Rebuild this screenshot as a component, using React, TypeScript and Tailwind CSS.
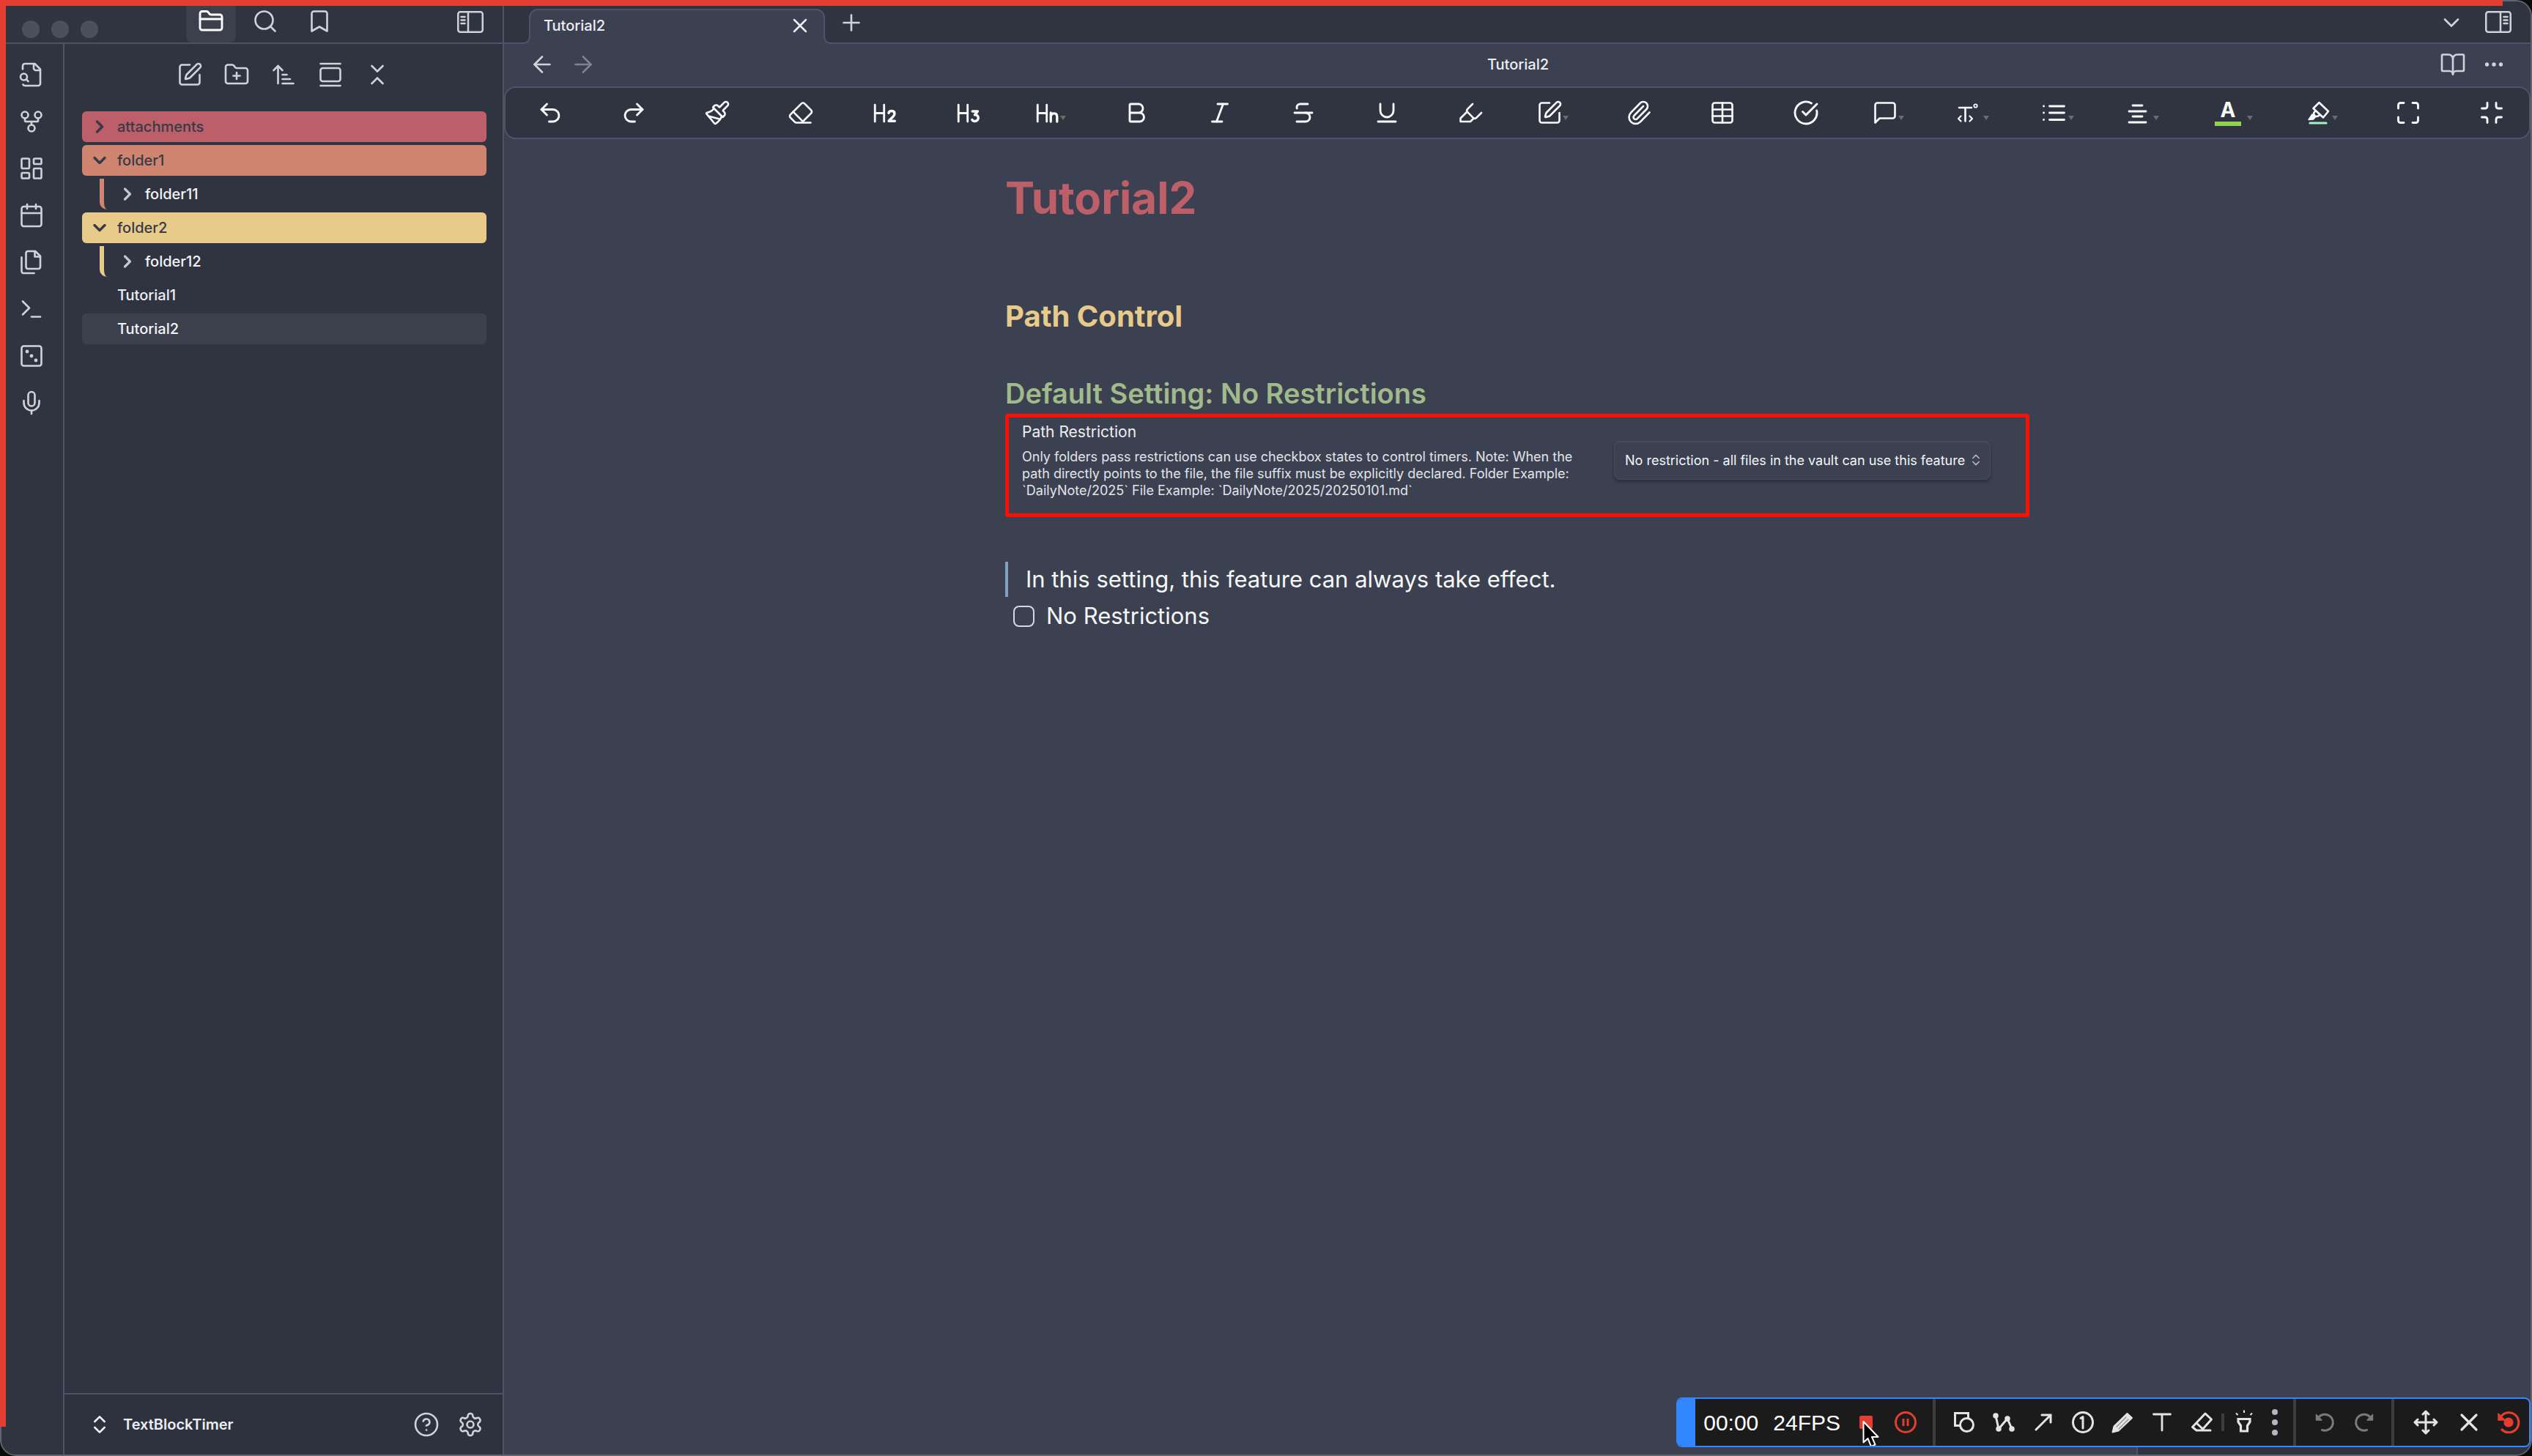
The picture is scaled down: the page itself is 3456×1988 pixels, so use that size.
import React from "react";
import {
  ArrowLeft,
  ArrowRight,
  ArrowUpNarrowWide,
  Bold,
  BookOpen,
  Bookmark,
  Calendar,
  ChevronDown,
  ChevronRight,
  ChevronsDownUp,
  ChevronsUpDown,
  CircleCheckBig,
  CircleHelp,
  Eraser,
  FolderClosed,
  FolderPlus,
  GalleryVertical,
  GitFork,
  Highlighter,
  Italic,
  LayoutDashboard,
  Maximize,
  Mic,
  Minimize,
  Paintbrush,
  Paperclip,
  Plus,
  Redo2,
  Search,
  SquarePen,
  Strikethrough,
  Table,
  Terminal,
  Underline,
  Undo2,
  X,
} from "lucide-react";

type SvgProps = { className?: string; children: React.ReactNode; box?: string; stroke?: number };

function Glyph({ className = "size-9", children, box = "0 0 24 24", stroke = 1.75 }: SvgProps) {
  return (
    <svg
      viewBox={box}
      className={className}
      fill="none"
      stroke="currentColor"
      strokeWidth={stroke}
      strokeLinecap="round"
      strokeLinejoin="round"
      aria-hidden="true"
    >
      {children}
    </svg>
  );
}

function IconButton({ label, className = "", children }: { label: string; className?: string; children: React.ReactNode }) {
  return (
    <button type="button" aria-label={label} className={`flex shrink-0 items-center justify-center ${className}`}>
      {children}
    </button>
  );
}

const FileSearchIcon = () => (
  <Glyph>
    <path d="M14 2v4a2 2 0 0 0 2 2h4" />
    <path d="M4.3 21a2 2 0 0 0 1.7 1H18a2 2 0 0 0 2-2V7l-5-5H6a2 2 0 0 0-2 2v3" />
    <path d="m9 18-1.8-1.8" />
    <circle cx="5" cy="14" r="3" />
  </Glyph>
);

const FilesIcon = () => (
  <Glyph>
    <path d="M15.5 2H8.6c-.4 0-.8.2-1.1.5-.3.3-.5.7-.5 1.1v12.8c0 .4.2.8.5 1.1.3.3.7.5 1.1.5h9.8c.4 0 .8-.2 1.1-.5.3-.3.5-.7.5-1.1V6.5L15.5 2z" />
    <path d="M3 7.6v12.8c0 .4.2.8.5 1.1.3.3.7.5 1.1.5h9.8" />
    <path d="M15 2v5h5" />
  </Glyph>
);

const DiceIcon = () => (
  <Glyph>
    <rect x="3" y="3" width="18" height="18" rx="2" />
    <g fill="currentColor" strokeWidth="0.8">
      <circle cx="8" cy="8" r="1.2" />
      <circle cx="12" cy="12" r="1.2" />
      <circle cx="16" cy="16" r="1.2" />
    </g>
  </Glyph>
);

const GearIcon = () => (
  <Glyph>
    <path d="M12.22 2h-.44a2 2 0 0 0-2 2v.18a2 2 0 0 1-1 1.73l-.43.25a2 2 0 0 1-2 0l-.15-.08a2 2 0 0 0-2.73.73l-.22.38a2 2 0 0 0 .73 2.73l.15.1a2 2 0 0 1 1 1.72v.51a2 2 0 0 1-1 1.74l-.15.09a2 2 0 0 0-.73 2.73l.22.38a2 2 0 0 0 2.73.73l.15-.08a2 2 0 0 1 2 0l.43.25a2 2 0 0 1 1 1.73V20a2 2 0 0 0 2 2h.44a2 2 0 0 0 2-2v-.18a2 2 0 0 1 1-1.73l.43-.25a2 2 0 0 1 2 0l.15.08a2 2 0 0 0 2.73-.73l.22-.39a2 2 0 0 0-.73-2.73l-.15-.08a2 2 0 0 1-1-1.74v-.5a2 2 0 0 1 1-1.74l.15-.09a2 2 0 0 0 .73-2.73l-.22-.38a2 2 0 0 0-2.73-.73l-.15.08a2 2 0 0 1-2 0l-.43-.25a2 2 0 0 1-1-1.73V4a2 2 0 0 0-2-2z" />
    <circle cx="12" cy="12" r="3" />
  </Glyph>
);

function PanelIcon({ right = false }: { right?: boolean }) {
  return (
    <Glyph box="0 0 36 30" className="h-[30px] w-9" stroke={2.5}>
      <rect x="1.25" y="1.25" width="33.5" height="27.5" rx="3" />
      {right ? <path d="M21 1.5v27M25.5 8h5M25.5 12.5h5M25.5 17h5" /> : <path d="M15 1.5v27M5.5 8h5M5.5 12.5h5M5.5 17h5" />}
    </Glyph>
  );
}

const ribbon = [
  { label: "Quick switcher", icon: <FileSearchIcon /> },
  { label: "Graph view", icon: <GitFork className="size-9" strokeWidth={1.75} /> },
  { label: "Canvas", icon: <LayoutDashboard className="size-9" strokeWidth={1.75} /> },
  { label: "Daily note", icon: <Calendar className="size-9" strokeWidth={1.75} /> },
  { label: "Templates", icon: <FilesIcon /> },
  { label: "Command palette", icon: <Terminal className="size-9" strokeWidth={1.75} /> },
  { label: "Random note", icon: <DiceIcon /> },
  { label: "Audio recorder", icon: <Mic className="size-9" strokeWidth={1.75} /> },
];

function FolderRow({ name, open = false, tone }: { name: string; open?: boolean; tone: string }) {
  const Chevron = open ? ChevronDown : ChevronRight;
  return (
    <button type="button" aria-expanded={open} className={`flex h-[42px] items-center rounded-md pl-2.5 text-[#373b46] ${tone}`}>
      <Chevron className="mr-2.5 size-7" strokeWidth={3} />
      {name}
    </button>
  );
}

function NestedRow({ name, tone }: { name: string; tone: string }) {
  return (
    <div className="flex h-[42px] pl-6">
      <span className={`h-[42px] w-2.5 rounded-bl-[10px] border-l-[6px] ${tone}`} />
      <button type="button" aria-expanded={false} className="flex items-center pl-3.5 text-[#f2f4f8]">
        <ChevronRight className="mr-2.5 size-7 text-[#c3c7d0]" strokeWidth={2.75} />
        {name}
      </button>
    </div>
  );
}

function Sidebar() {
  return (
    <aside className="flex w-[686px] shrink-0 flex-col border-r-2 border-[#4a556a] bg-[#2f3440] text-[#d0d2d9]">
      <header className="flex h-[58px] shrink-0 items-start border-b-2 border-[#4a556a] pt-1.5">
        <div className="flex gap-4 pl-7 pt-5">
          <span className="size-6 rounded-full bg-[#4b505c]" />
          <span className="size-6 rounded-full bg-[#4b505c]" />
          <span className="size-6 rounded-full bg-[#4b505c]" />
        </div>
        <nav className="ml-[120px] flex">
          <IconButton label="Files" className="h-[50px] w-[68px] rounded-b-lg bg-[#3b404c] pb-2 text-white">
            <FolderClosed className="size-9" strokeWidth={1.9} />
          </IconButton>
          <IconButton label="Search" className="h-[50px] w-20 pb-2">
            <Search className="size-9" strokeWidth={1.75} />
          </IconButton>
          <IconButton label="Bookmarks" className="h-[50px] w-[68px] pb-2">
            <Bookmark className="size-9" strokeWidth={1.75} />
          </IconButton>
        </nav>
        <IconButton label="Collapse sidebar" className="ml-auto mr-[26px] h-11">
          <PanelIcon />
        </IconButton>
      </header>
      <div className="flex min-h-0 grow">
        <nav aria-label="Ribbon" className="flex w-[86px] shrink-0 flex-col items-center border-r-2 border-[#4a556a] pr-0.5 pt-2.5">
          {ribbon.map((item) => (
            <IconButton key={item.label} label={item.label} className="size-16">
              {item.icon}
            </IconButton>
          ))}
        </nav>
        <div className="flex min-w-0 grow flex-col">
          <div className="flex justify-center pt-2.5">
            <IconButton label="New note" className="size-16">
              <SquarePen className="size-9" strokeWidth={1.75} />
            </IconButton>
            <IconButton label="New folder" className="size-16">
              <FolderPlus className="size-9" strokeWidth={1.75} />
            </IconButton>
            <IconButton label="Sort order" className="size-16">
              <ArrowUpNarrowWide className="size-9" strokeWidth={1.75} />
            </IconButton>
            <IconButton label="Reveal current file" className="size-16">
              <GalleryVertical className="size-9" strokeWidth={1.75} />
            </IconButton>
            <IconButton label="Collapse all" className="size-16">
              <ChevronsDownUp className="size-9" strokeWidth={1.75} />
            </IconButton>
          </div>
          <div className="flex grow flex-col gap-1 pl-6 pr-[22px] pt-[18px] text-xl font-medium">
            <FolderRow name="attachments" tone="bg-[#bc5f69]" />
            <FolderRow name="folder1" open tone="bg-[#cf8570]" />
            <NestedRow name="folder11" tone="border-[#cf8570]" />
            <FolderRow name="folder2" open tone="bg-[#e8ca8a]" />
            <NestedRow name="folder12" tone="border-[#e8ca8a]" />
            <button type="button" className="flex h-[42px] items-center rounded-md pl-12 text-[#eceef2]">
              Tutorial1
            </button>
            <button type="button" className="flex h-[42px] items-center rounded-md bg-[#3b404c] pl-12 text-[#f2f4f8]">
              Tutorial2
            </button>
          </div>
          <footer className="flex h-[84px] shrink-0 items-center border-t-2 border-[#4a556a] bg-[#2e323e] pl-8 pr-[26px]">
            <button type="button" className="flex items-center gap-4 text-xl font-semibold text-[#eceef3]">
              <ChevronsUpDown className="size-8" strokeWidth={2} />
              TextBlockTimer
            </button>
            <IconButton label="Help" className="ml-auto h-12 w-[84px]">
              <CircleHelp className="size-9" strokeWidth={1.75} />
            </IconButton>
            <IconButton label="Settings" className="h-12 w-9">
              <GearIcon />
            </IconButton>
          </footer>
        </div>
      </div>
    </aside>
  );
}

function TabBar() {
  return (
    <header className="flex h-[58px] shrink-0 items-end border-b-2 border-[#4a556a] bg-[#2f3440] pl-[34px] pr-[26px] text-[#d0d2d9]">
      <div className="relative -mb-0.5 flex h-12 w-[404px] items-center rounded-t-xl border-x-2 border-t-2 border-[#4a556a] bg-[#3b4150] pb-1 pl-[18px] pr-4">
        <span className="absolute -left-3 bottom-0 size-3 bg-[#3b4150]">
          <span className="block size-3 rounded-br-[10px] border-b-2 border-r-2 border-[#4a556a] bg-[#2f3440]" />
        </span>
        <span className="absolute -right-3 bottom-0 size-3 bg-[#3b4150]">
          <span className="block size-3 rounded-bl-[10px] border-b-2 border-l-2 border-[#4a556a] bg-[#2f3440]" />
        </span>
        <span className="grow text-xl font-medium text-[#eceef2]">Tutorial2</span>
        <IconButton label="Close tab" className="text-[#eceef2]">
          <X className="size-8" strokeWidth={1.9} />
        </IconButton>
      </div>
      <IconButton label="New tab" className="ml-[18px] h-[54px]">
        <Plus className="size-9" strokeWidth={1.75} />
      </IconButton>
      <IconButton label="Tab list" className="ml-auto h-[54px]">
        <ChevronDown className="size-9" strokeWidth={1.75} />
      </IconButton>
      <IconButton label="Expand sidebar" className="ml-7 h-14">
        <PanelIcon right />
      </IconButton>
    </header>
  );
}

function ViewHeader() {
  return (
    <div className="flex h-[58px] shrink-0 items-center pb-0.5 pl-[34px] pr-8 text-[#d0d2d9]">
      <div className="flex flex-1 gap-5">
        <IconButton label="Back" className="size-9">
          <ArrowLeft className="size-9" strokeWidth={1.75} />
        </IconButton>
        <IconButton label="Forward" className="size-9 text-[#80848f]">
          <ArrowRight className="size-9" strokeWidth={1.75} />
        </IconButton>
      </div>
      <span className="text-xl font-medium text-[#eceef2]">Tutorial2</span>
      <div className="flex flex-1 justify-end gap-5">
        <IconButton label="Reading view" className="size-9">
          <BookOpen className="size-9" strokeWidth={1.75} />
        </IconButton>
        <IconButton label="More options" className="size-9">
          <svg viewBox="0 0 36 36" className="size-9" fill="currentColor" aria-hidden="true">
            <circle cx="8.5" cy="18" r="2.7" />
            <circle cx="18" cy="18" r="2.7" />
            <circle cx="27.5" cy="18" r="2.7" />
          </svg>
        </IconButton>
      </div>
    </div>
  );
}

const H = <path d="M3.5 4.7v15.3M11.8 4.7v15.3M3.5 12.3h8.3" />;

const tools: { label: string; icon: React.ReactNode; menu?: boolean; wide?: boolean }[] = [
  { label: "Undo", icon: <Undo2 className="size-9" strokeWidth={1.9} /> },
  { label: "Redo", icon: <Redo2 className="size-9" strokeWidth={1.9} /> },
  { label: "Format brush", icon: <Paintbrush className="size-9" strokeWidth={1.75} /> },
  { label: "Clear formatting", icon: <Eraser className="size-9" strokeWidth={1.75} /> },
  {
    label: "Heading 2",
    icon: (
      <Glyph stroke={1.9}>
        {H}
        <path strokeWidth="2.3" d="M16 12.2c.6-2.6 5.4-2.5 5.3.6 0 2.5-3.4 4.2-5.2 6.7h5.5" />
      </Glyph>
    ),
  },
  {
    label: "Heading 3",
    icon: (
      <Glyph stroke={1.9}>
        {H}
        <path strokeWidth="2.3" d="M16.2 10.6h4.8l-2.7 3.3c4.3-.3 4.3 5.7 0 5.7-1.3 0-2-.5-2.4-1.3" />
      </Glyph>
    ),
  },
  {
    label: "Heading level",
    menu: true,
    icon: (
      <Glyph stroke={1.9}>
        {H}
        <path strokeWidth="2.2" d="M15.5 12v8M15.5 15c.8-3.4 5.7-3.3 5.7.4V20" />
      </Glyph>
    ),
  },
  { label: "Bold", icon: <Bold className="size-9" strokeWidth={1.9} /> },
  { label: "Italic", icon: <Italic className="size-9" strokeWidth={1.9} /> },
  { label: "Strikethrough", icon: <Strikethrough className="size-9" strokeWidth={1.9} /> },
  { label: "Underline", icon: <Underline className="size-9" strokeWidth={1.9} /> },
  { label: "Highlight", icon: <Highlighter className="size-9" strokeWidth={1.75} /> },
  { label: "Callout", menu: true, icon: <SquarePen className="size-9" strokeWidth={1.75} /> },
  { label: "Attach file", icon: <Paperclip className="size-9" strokeWidth={1.75} /> },
  { label: "Insert table", icon: <Table className="size-9" strokeWidth={1.75} /> },
  { label: "Task", icon: <CircleCheckBig className="size-9" strokeWidth={1.9} /> },
  {
    label: "Comment",
    menu: true,
    icon: (
      <Glyph>
        <path d="M21 15a2 2 0 0 1-2 2H7l-4 4V5a2 2 0 0 1 2-2h14a2 2 0 0 1 2 2z" />
      </Glyph>
    ),
  },
  {
    label: "Text style",
    menu: true,
    icon: (
      <Glyph box="0 0 36 36" stroke={2.6}>
        <path d="M3 11h17M11.500 11v18.500" />
        <path strokeWidth="2.2" d="M5.5 22.5 2 26l3.5 3.5M17.5 22.5 21 26l-3.5 3.5" />
        <circle cx="25.5" cy="8.5" r="2.2" strokeWidth="1.8" />
      </Glyph>
    ),
  },
  {
    label: "List",
    menu: true,
    icon: (
      <Glyph box="0 0 36 36" stroke={2.8}>
        <path d="M10.5 9h20M10.5 18h20M10.5 27.5h20M2.5 9h.1M2.5 18h.1M2.5 27.5h.1" />
      </Glyph>
    ),
  },
  {
    label: "Align",
    menu: true,
    icon: (
      <Glyph box="0 0 36 36" stroke={2.8}>
        <path d="M8 8h13M3 16h23M8 23h13M3 31h23" />
      </Glyph>
    ),
  },
  { label: "Font color", menu: true, wide: true, icon: null },
  {
    label: "Background color",
    menu: true,
    icon: (
      <Glyph box="0 0 36 36" stroke={2.6}>
        <path d="m18.5 4 12.5 12-7 8.500L10.500 12z" />
        <path d="M13 16c-2 1.500-2.500 3-1.500 5l1.500 1.500c2 1 4 .5 6-1.500" />
        <path fill="currentColor" strokeWidth="1.5" d="m9 20-5 7.500 6.500-.5 2.500-2.500z" />
        <path stroke="#a6f3cb" strokeWidth="3.2" d="M6 32h22" />
      </Glyph>
    ),
  },
  { label: "Fullscreen", icon: <Maximize className="size-9" strokeWidth={1.9} /> },
  { label: "Exit focus", icon: <Minimize className="size-9" strokeWidth={1.9} /> },
];

function FormatToolbar() {
  return (
    <div
      role="toolbar"
      aria-label="Formatting"
      className="flex h-[72px] shrink-0 items-center justify-between rounded-2xl border-2 border-[#4a556a] bg-[#2f3440] pl-[37px] pr-[27px] text-[#f8f9fb]"
    >
      {tools.map((tool) => {
        if (tool.wide) {
          return (
            <button key={tool.label} type="button" aria-label={tool.label} className="relative flex h-10 w-[62px] flex-col pl-1">
              <span className="flex h-8 w-9 items-center justify-center text-[28px] font-bold leading-none">A</span>
              <span className="h-1.5 w-9 bg-[#93d251]" />
              <Caret />
            </button>
          );
        }
        return (
          <button
            key={tool.label}
            type="button"
            aria-label={tool.label}
            className={tool.menu ? "relative flex h-10 w-[50px] items-center" : "flex h-10 w-12 items-center justify-center"}
          >
            {tool.icon}
            {tool.menu && <Caret />}
          </button>
        );
      })}
    </div>
  );
}

function Caret() {
  return (
    <svg viewBox="0 0 8 6" className="absolute bottom-2.5 right-1.5 h-1.5 w-2 text-[#6c6c6a]" fill="currentColor" aria-hidden="true">
      <path d="M0 0h8L4 6z" />
    </svg>
  );
}

function Note() {
  return (
    <main className="min-h-0 grow">
      <article className="mx-auto w-[1398px] max-w-full pt-[42px]">
        <h1 className="text-[60px] font-bold leading-[76px] text-[#bc5f69]">Tutorial2</h1>
        <h2 className="mt-24 text-[40px] font-bold leading-[56px] text-[#e8ca8a]">Path Control</h2>
        <h3 className="mt-[52px] text-[38px] font-semibold leading-[50px] text-[#a1ba8b]">Default Setting: No Restrictions</h3>
        <section className="mt-[3px] flex h-[141px] items-start rounded-sm border-[5px] border-[#fd1003] pl-[18px] pr-12 text-[#eceef2]">
          <div className="w-[760px] pt-1.5">
            <h4 className="text-[21px] leading-7">Path Restriction</h4>
            <p className="mt-2 text-lg leading-[23px] text-[#e2e4e9]">
              Only folders pass restrictions can use checkbox states to control timers. Note: When the path directly points to the
              file, the file suffix must be explicitly declared. Folder Example: `DailyNote/2025` File Example:
              `DailyNote/2025/20250101.md`
            </p>
          </div>
          <div className="relative ml-auto mt-8">
            <select
              aria-label="Path Restriction"
              className="h-[53px] w-[514px] appearance-none rounded-lg border border-t-2 border-[#474c5b] bg-[#3b4150] pl-3.5 text-lg text-[#f4f5f8] shadow-[0_3px_4px_rgba(20,24,34,0.45)]"
            >
              <option>No restriction - all files in the vault can use this feature</option>
            </select>
            <ChevronsUpDown className="pointer-events-none absolute right-2.5 top-4 size-5 text-[#b4b7c0]" strokeWidth={2} />
          </div>
        </section>
        <blockquote className="mt-[61px] flex h-12 items-center border-l-4 border-[#81a1c1] pl-6 text-[31px] text-[#f6f7f9]">
          In this setting, this feature can always take effect.
        </blockquote>
        <label className="mt-0.5 flex h-12 items-center gap-4 pl-[11px] text-[31px] text-[#f6f7f9]">
          <input type="checkbox" className="size-[29px] appearance-none rounded-lg border-2 border-[#d5d8e2]" />
          No Restrictions
        </label>
      </article>
    </main>
  );
}

function RecIcon({ children, stroke = 3 }: { children: React.ReactNode; stroke?: number }) {
  return (
    <Glyph box="0 0 36 36" stroke={stroke}>
      {children}
    </Glyph>
  );
}

const drawTools = [
  {
    label: "Shapes",
    icon: (
      <RecIcon>
        <path strokeLinejoin="miter" d="M11 22.5H5.5V5.5h18V11" />
        <circle cx="21.5" cy="21.5" r="9" />
      </RecIcon>
    ),
  },
  {
    label: "Polyline",
    icon: (
      <RecIcon>
        <path d="M7 9l4 18 12-14 6 14" />
        <g fill="currentColor" strokeWidth="1.5">
          <circle cx="7" cy="9" r="3" />
          <circle cx="11" cy="27" r="3" />
          <circle cx="23" cy="13" r="3" />
          <circle cx="29" cy="27" r="3" />
        </g>
      </RecIcon>
    ),
  },
  {
    label: "Arrow",
    icon: (
      <RecIcon>
        <path strokeLinejoin="miter" d="M8 28 28 8M16 8h12v10" />
      </RecIcon>
    ),
  },
  {
    label: "Number marker",
    icon: (
      <RecIcon>
        <circle cx="18" cy="18" r="13.5" />
        <path d="m15 12.5 3-2V26" />
      </RecIcon>
    ),
  },
  {
    label: "Pencil",
    icon: (
      <RecIcon stroke={2}>
        <path fill="currentColor" d="M24.5 6 31 12 12.5 29.5 4.5 31.5l2-8z" />
        <path stroke="#8d8d8d" strokeWidth="1.3" d="M23 11 10 24M26 14 13 27" />
      </RecIcon>
    ),
  },
  {
    label: "Text",
    icon: (
      <RecIcon stroke={2.8}>
        <path d="M6.5 7h23M18 7v22" />
      </RecIcon>
    ),
  },
  {
    label: "Eraser",
    icon: (
      <RecIcon>
        <path d="M11 29 5.5 24.5 23 6l8.5 8L18 29zM11 19l8.500 8M11 29h19" />
      </RecIcon>
    ),
  },
];

function RecorderBar() {
  return (
    <div
      role="toolbar"
      aria-label="Screen recorder"
      className="absolute bottom-2.5 right-0 flex h-[68px] items-stretch overflow-hidden rounded-lg border-y-2 border-r-2 border-[#3287ff] bg-[#1b1b1b] text-[#e4e4e4]"
    >
      <span className="w-[26px] bg-[#3287ff]" />
      <div className="flex items-center pl-[11px] pr-2.5">
        <span className="font-['Liberation_Sans',sans-serif] text-[30px] text-white">00:00</span>
        <span className="ml-5 font-['Liberation_Sans',sans-serif] text-[30px] text-white">24FPS</span>
        <IconButton label="Stop" className="ml-2 h-16 w-[54px]">
          <span className="size-[18px] rounded-xs bg-[#e43d31]" />
        </IconButton>
        <IconButton label="Pause" className="h-16 w-[54px] text-[#e43d31]">
          <RecIcon>
            <circle cx="18" cy="18" r="13.5" />
            <path strokeLinecap="butt" d="M15 13v10M21 13v10" />
          </RecIcon>
        </IconButton>
      </div>
      <span className="w-1 bg-[#3d3d3d]" />
      <div className="flex items-center pl-3 pr-2.5">
        {drawTools.map((t) => (
          <IconButton key={t.label} label={t.label} className="h-16 w-[54px]">
            {t.icon}
          </IconButton>
        ))}
        <span className="h-6 w-1 bg-[#3d3d3d]" />
        <IconButton label="Spotlight" className="h-16 w-[54px]">
          <RecIcon stroke={3.2}>
            <path strokeLinejoin="miter" strokeLinecap="butt" d="M10 13.5h16v4l-3.5 5V30h-9v-7.5l-3.5-5z" />
            <path strokeWidth="2" strokeLinecap="butt" d="M18 1.5V5M7 5.5l2.5 2.5M29 5.5 26.5 8" />
          </RecIcon>
        </IconButton>
        <IconButton label="More tools" className="h-16 w-[30px] text-[#b4b7c3]">
          <svg viewBox="0 0 8 36" className="h-9 w-2" fill="currentColor" aria-hidden="true">
            <circle cx="4" cy="4" r="4" />
            <circle cx="4" cy="18" r="4" />
            <circle cx="4" cy="32" r="4" />
          </svg>
        </IconButton>
      </div>
      <span className="w-1 bg-[#3d3d3d]" />
      <div className="flex items-center pl-3 pr-2.5 text-[#7a7a7a]">
        <IconButton label="Undo drawing" className="h-16 w-[54px]">
          <RecIcon>
            <path d="M14.5 28.5A11 11 0 1 0 10 11" />
            <path fill="currentColor" strokeWidth="1.5" d="M6.5 7.5v7.5h7.5z" />
          </RecIcon>
        </IconButton>
        <IconButton label="Redo drawing" className="h-16 w-[54px]">
          <RecIcon>
            <path d="M21.5 28.5A11 11 0 1 1 26 11" />
            <path fill="currentColor" strokeWidth="1.5" d="M29.5 7.5v7.5H22z" />
          </RecIcon>
        </IconButton>
      </div>
      <span className="w-1 bg-[#3d3d3d]" />
      <div className="flex items-center pl-4 pr-1.5">
        <IconButton label="Move" className="h-16 w-[54px]">
          <RecIcon>
            <path d="M18 3v30M3 18h30M14 7l4-4 4 4M14 29l4 4 4-4M7 14l-4 4 4 4M29 14l4 4-4 4" />
          </RecIcon>
        </IconButton>
        <IconButton label="Close recorder" className="h-16 w-16">
          <RecIcon stroke={3.2}>
            <path d="M8 8l20 20M28 8 8 28" />
          </RecIcon>
        </IconButton>
        <IconButton label="Restart recording" className="h-16 w-11 text-[#e43d31]">
          <RecIcon stroke={3.2}>
            <path d="M9 28A13.500 13.500 0 1 0 8.500 9" />
            <path fill="currentColor" strokeWidth="1.5" d="M4 6v9h9z" />
            <circle cx="18" cy="18" r="5" fill="currentColor" />
          </RecIcon>
        </IconButton>
      </div>
      <Pointer />
    </div>
  );
}

function Pointer() {
  return (
    <svg viewBox="0 0 24 38" className="pointer-events-none absolute left-[254px] top-[29px] h-[38px] w-6" aria-hidden="true">
      <path d="M1.5 2v28.500l6-5.500 4.500 11 5.500-2.500-4.500-10.500h8.500z" fill="#000" stroke="#fff" strokeWidth="2" strokeLinejoin="round" />
    </svg>
  );
}

export default function App() {
  return (
    <div className="relative h-screen w-full overflow-hidden bg-[#0a0c0c] font-['Inter',sans-serif]">
      <div className="relative flex h-full overflow-hidden rounded-[22px] border-2 border-[#60656f] bg-[#3b4150]">
        <Sidebar />
        <div className="flex min-w-0 grow flex-col bg-[#3b4150]">
          <TabBar />
          <ViewHeader />
          <FormatToolbar />
          <Note />
        </div>
        <div className="absolute bottom-0 right-0 h-11 w-[538px] rounded-tl-2xl border-l-2 border-t-2 border-[#4a556a] bg-[#2f3440]" />
        <RecorderBar />
      </div>
      <div className="absolute left-0 right-10 top-0 h-2 bg-[#e43d31]" />
      <div className="absolute bottom-10 left-0 top-0 w-2 bg-[#e43d31]" />
    </div>
  );
}
